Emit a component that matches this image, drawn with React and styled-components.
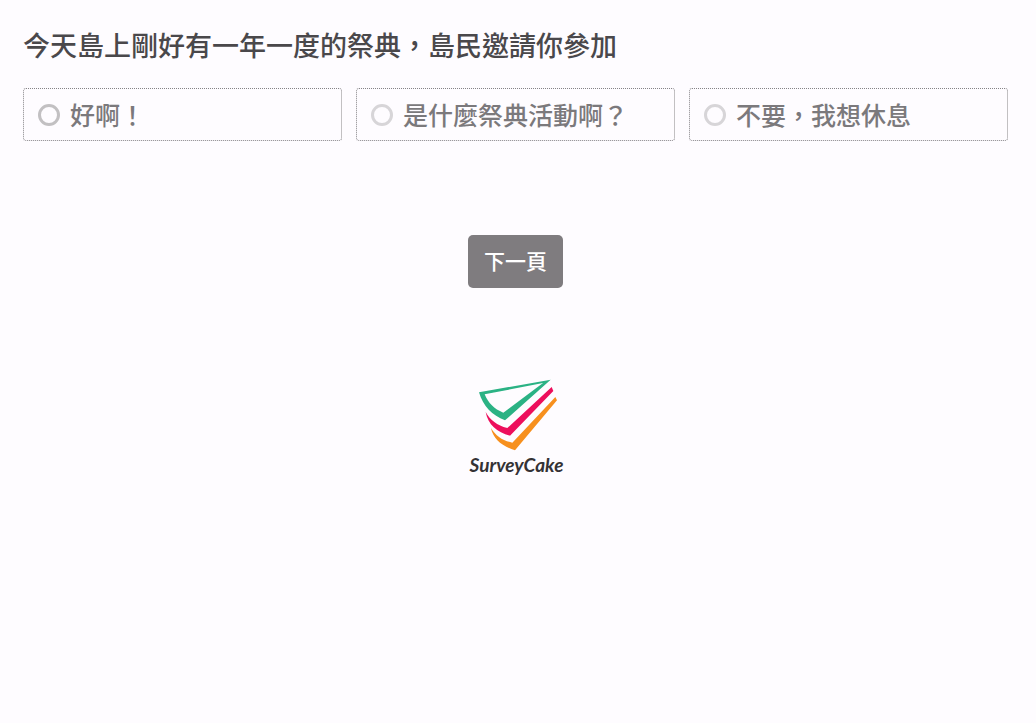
import React, { useState } from 'react';
import styled, { createGlobalStyle } from 'styled-components';

const OPTIONS = [
    { value: 'yes', label: '好啊！' },
    { value: 'what', label: '是什麼祭典活動啊？' },
    { value: 'rest', label: '不要，我想休息' }
];

function App() {
    const [answer, setAnswer] = useState('');

    const handleChange = (event) => {
        setAnswer(event.target.value);
    }

    const handleSubmit = (event) => {
        event.preventDefault();
    }

    return (
        <>
            <GlobalStyle />
            <Page>
                <form onSubmit={handleSubmit}>
                    <Question>
                        <Title>今天島上剛好有一年一度的祭典，島民邀請你參加</Title>
                        <OptionList>
                            {OPTIONS.map((option, index) => (
                                <Option key={option.value}>
                                    <Radio
                                        type="radio"
                                        name="festival"
                                        value={option.value}
                                        checked={answer === option.value}
                                        onChange={handleChange}
                                        $dark={index === 0}
                                    />
                                    <OptionText>{option.label}</OptionText>
                                </Option>
                            ))}
                        </OptionList>
                    </Question>
                    <Actions>
                        <NextButton type="submit">下一頁</NextButton>
                    </Actions>
                </form>
                <Footer>
                    <Brand href="#">
                        <Logo />
                        <BrandName>SurveyCake</BrandName>
                    </Brand>
                </Footer>
            </Page>
        </>
    );
}

function Logo() {
    return (
        <svg width="82" height="74" viewBox="45 24 246 222" aria-hidden="true">
            <path fill="#2bb284" fillRule="evenodd" d="M54 67 L269 29 L132 151 C94 137 66 109 54 67 Z M71 73 C82 99 99 117 127 128 L246 39 Z" />
            <path fill="#ed0f5c" d="M74 126 C88 151 108 166 139 174 L272 51 L277 63 L147 197 C108 187 81 164 74 126 Z" />
            <path fill="#f7901e" d="M90 174 C105 199 125 212 154 218 L283 81 L288 91 L162 241 C124 229 96 207 90 174 Z" />
        </svg>
    );
}

const GlobalStyle = createGlobalStyle`
    body {
        margin: 0;
        background-color: #fefcff;
        font-family: "Noto Sans CJK TC", sans-serif;
        font-weight: 500;
    }
`;

const Page = styled.main`
    padding: 25px 28px 40px 23px;
`;

const Question = styled.fieldset`
    margin: 0;
    padding: 0;
    min-width: 0;
    border: none;
`;

const Title = styled.legend`
    padding: 0;
    margin-bottom: 23px;
    font-size: 27px;
    line-height: 40px;
    color: #4a484b;
`;

const OptionList = styled.div`
    display: grid;
    grid-template-columns: repeat(3, 1fr);
    gap: 14px;
`;

const Option = styled.label`
    display: flex;
    align-items: center;
    gap: 10px;
    box-sizing: border-box;
    min-height: 53px;
    padding: 6px 14px;
    border: 1px dotted #858386;
    border-radius: 3px;
    color: #7b797c;
    cursor: pointer;
`;

const OptionText = styled.span`
    padding-bottom: 2px;
    font-size: 25px;
    line-height: 36px;
`;

const Radio = styled.input`
    appearance: none;
    flex: none;
    box-sizing: border-box;
    width: 22px;
    height: 22px;
    margin: 0;
    border: 3px solid ${(props) => (props.$dark ? '#c2c0c2' : '#d7d5d8')};
    border-radius: 50%;
    cursor: pointer;

    &:checked {
        border-width: 7px;
        border-color: #7f7c7f;
    }
`;

const Actions = styled.div`
    display: flex;
    justify-content: center;
    margin-top: 94px;
`;

const NextButton = styled.button`
    padding: 9px 16px 11px;
    border: none;
    border-radius: 5px;
    background-color: #7f7c7f;
    color: #fff;
    font-family: inherit;
    font-size: 21px;
    font-weight: 500;
    line-height: 33px;
    cursor: pointer;

    &:active {
        background-color: #696669;
    }
`;

const Footer = styled.footer`
    display: flex;
    justify-content: center;
    margin-top: 90px;
    padding-left: 2px;
`;

const Brand = styled.a`
    display: flex;
    flex-direction: column;
    align-items: center;
    color: #343235;
    text-decoration: none;
`;

const BrandName = styled.span`
    font-family: Lato, sans-serif;
    font-size: 19px;
    font-style: italic;
    font-weight: 700;
    line-height: 26px;
`;

export default App;
